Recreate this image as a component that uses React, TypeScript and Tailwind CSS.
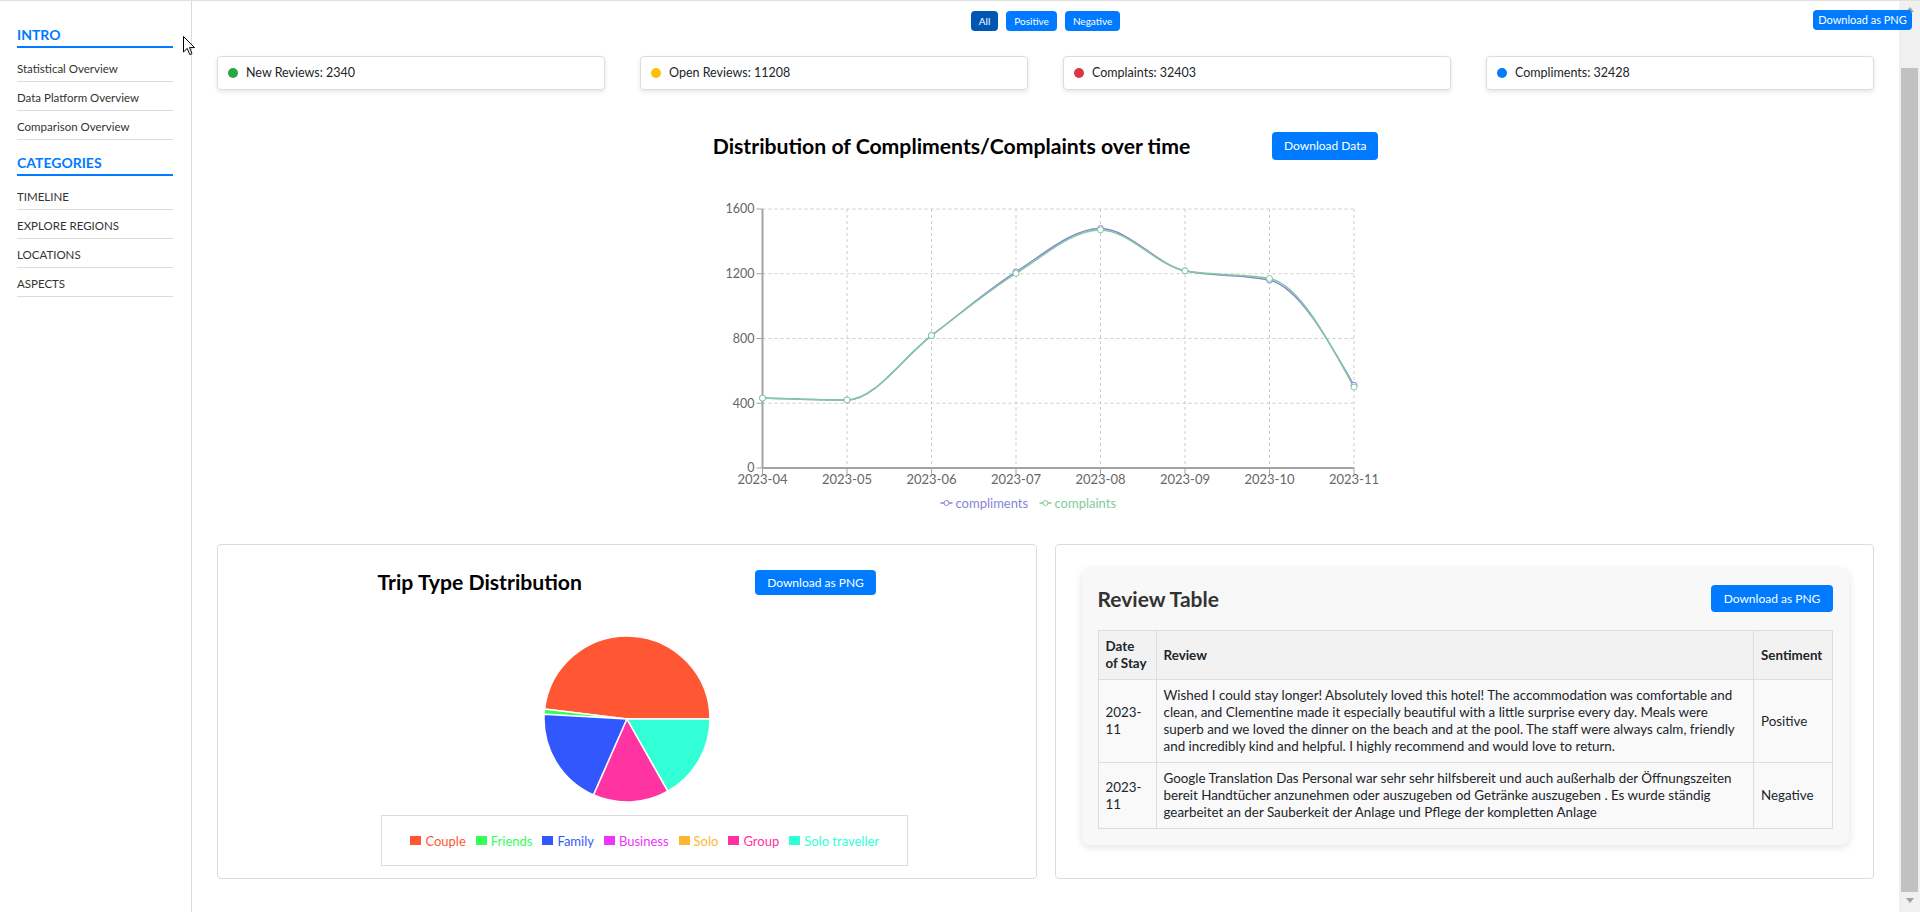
import React from 'react';

type Pt = {x: number, y: number}

const months = ['2023-04', '2023-05', '2023-06', '2023-07', '2023-08', '2023-09', '2023-10', '2023-11']
const compliments = [432, 420, 818, 1212, 1479, 1218, 1161, 511]
const complaints = [432, 420, 818, 1202, 1471, 1218, 1171, 500]

const X0 = 66.5
const STEP = 84.5
const yOf = (v: number) => 277 - v * 259 / 1600

// monotone-x curve, same idea as d3/recharts "monotone"
const monotonePath = (pts: Pt[]) => {
    const n = pts.length
    const sign = (v: number) => (v < 0 ? -1 : 1)
    const t: number[] = new Array(n).fill(0)
    for (let i = 1; i < n - 1; i++) {
        const h0 = pts[i].x - pts[i - 1].x
        const h1 = pts[i + 1].x - pts[i].x
        const s0 = (pts[i].y - pts[i - 1].y) / h0
        const s1 = (pts[i + 1].y - pts[i].y) / h1
        const p = (s0 * h1 + s1 * h0) / (h0 + h1)
        t[i] = (sign(s0) + sign(s1)) * Math.min(Math.abs(s0), Math.abs(s1), 0.5 * Math.abs(p)) || 0
    }
    const h = pts[1].x - pts[0].x
    t[0] = (3 * (pts[1].y - pts[0].y) / h - t[1]) / 2
    const hl = pts[n - 1].x - pts[n - 2].x
    t[n - 1] = (3 * (pts[n - 1].y - pts[n - 2].y) / hl - t[n - 2]) / 2
    let d = `M${pts[0].x},${pts[0].y}`
    for (let i = 0; i < n - 1; i++) {
        const dx = (pts[i + 1].x - pts[i].x) / 3
        d += ` C${pts[i].x + dx},${pts[i].y + dx * t[i]} ${pts[i + 1].x - dx},${pts[i + 1].y - dx * t[i + 1]} ${pts[i + 1].x},${pts[i + 1].y}`
    }
    return d
}

const trips = [
    {name: 'Couple', value: 481, color: '#ff5733'},
    {name: 'Friends', value: 10, color: '#33ff57'},
    {name: 'Family', value: 193, color: '#3357ff'},
    {name: 'Business', value: 0, color: '#f033ff'},
    {name: 'Solo', value: 0, color: '#ffb533'},
    {name: 'Group', value: 148, color: '#ff33a1'},
    {name: 'Solo traveller', value: 168, color: '#33ffd7'},
]

const stats = [
    {label: 'New Reviews: 2340', color: 'bg-[#28a745]'},
    {label: 'Open Reviews: 11208', color: 'bg-[#ffc107]'},
    {label: 'Complaints: 32403', color: 'bg-[#dc3545]'},
    {label: 'Compliments: 32428', color: 'bg-[#007bff]'},
]

const SideSection = ({title, items, className}: {title: string, items: string[], className: string}) => (
    <div className={className}>
        <div className="text-[14px] font-bold leading-[20px] text-[#007bff] border-b-2 border-[#007bff] pb-[1px]">{title}</div>
        <ul className="mt-[5px]">
            {items.map(item => (
                <li key={item} className="text-[11.5px] leading-[16px] text-[#333] pt-[8px] pb-[4px] border-b border-[#dcdcdc]">{item}</li>
            ))}
        </ul>
    </div>
)

const LineChartSvg = () => {
    const xs = months.map((_, i) => X0 + i * STEP)
    const pc = compliments.map((v, i) => ({x: xs[i], y: yOf(v)}))
    const pk = complaints.map((v, i) => ({x: xs[i], y: yOf(v)}))
    const right = xs[xs.length - 1]
    return (
        <svg width={700} height={325} className="block">
            {[400, 800, 1200, 1600].map(v => (
                <line key={v} x1={X0} x2={right} y1={yOf(v)} y2={yOf(v)} stroke="#ccc" strokeDasharray="3 3"/>
            ))}
            {xs.map(x => (
                <line key={x} x1={x} x2={x} y1={18} y2={277} stroke="#ccc" strokeDasharray="3 3"/>
            ))}
            <line x1={X0} x2={X0} y1={18} y2={277} stroke="#a3a3a3" strokeWidth={2}/>
            <line x1={X0} x2={right} y1={277} y2={277} stroke="#a3a3a3" strokeWidth={2}/>
            {[0, 400, 800, 1200, 1600].map(v => (
                <g key={v}>
                    <line x1={X0 - 6} x2={X0} y1={yOf(v)} y2={yOf(v)} stroke="#a3a3a3"/>
                    <text x={X0 - 8} y={yOf(v)} dy="0.35em" textAnchor="end" fontSize={12.5} fill="#666">{v}</text>
                </g>
            ))}
            {months.map((m, i) => (
                <g key={m}>
                    <line x1={xs[i]} x2={xs[i]} y1={277} y2={283} stroke="#a3a3a3"/>
                    <text x={xs[i]} y={288} dy="0.35em" textAnchor="middle" fontSize={13} fill="#666">{m}</text>
                </g>
            ))}
            <path d={monotonePath(pc)} fill="none" stroke="#8884d8" strokeWidth={1.5}/>
            <path d={monotonePath(pk)} fill="none" stroke="#82ca9d" strokeWidth={1.5}/>
            {pc.map((p, i) => <circle key={'c' + i} cx={p.x} cy={p.y} r={3} fill="#fff" stroke="#8884d8"/>)}
            {pk.map((p, i) => <circle key={'k' + i} cx={p.x} cy={p.y} r={3} fill="#fff" stroke="#82ca9d"/>)}
            <g>
                <line x1={244.5} x2={256.5} y1={312} y2={312} stroke="#8884d8" strokeWidth={1.5}/>
                <circle cx={250.5} cy={312} r={2.5} fill="#fff" stroke="#8884d8"/>
                <text x={259.5} y={312} dy="0.35em" fontSize={13} fill="#8884d8">compliments</text>
                <line x1={343.5} x2={355.5} y1={312} y2={312} stroke="#82ca9d" strokeWidth={1.5}/>
                <circle cx={349.5} cy={312} r={2.5} fill="#fff" stroke="#82ca9d"/>
                <text x={358.5} y={312} dy="0.35em" fontSize={13} fill="#82ca9d">complaints</text>
            </g>
        </svg>
    )
}

const PieSvg = () => {
    const total = trips.reduce((s, t) => s + t.value, 0)
    const cx = 85, cy = 85, r = 83
    let angle = 0
    const pt = (a: number) => {
        const rad = a * Math.PI / 180
        return `${cx + r * Math.cos(rad)},${cy - r * Math.sin(rad)}`
    }
    return (
        <svg width={170} height={170} className="block">
            {trips.filter(t => t.value > 0).map(t => {
                const a0 = angle
                const a1 = angle + t.value / total * 360
                angle = a1
                const large = a1 - a0 > 180 ? 1 : 0
                return (
                    <path key={t.name} d={`M${cx},${cy} L${pt(a0)} A${r},${r} 0 ${large} 0 ${pt(a1)} Z`}
                          fill={t.color} stroke="#fff" strokeWidth={1.5}/>
                )
            })}
        </svg>
    )
}

const BlueButton = ({children, className}: {children: React.ReactNode, className: string}) => (
    <button className={`bg-[#007bff] text-white rounded-[4px] ${className}`}>{children}</button>
)

const App: React.FC = () => {
    return (
        <div className="relative flex h-[912px] w-full overflow-hidden border-t border-[#e0e0e0] bg-white font-['Lato',sans-serif] text-[#212529]">
            {/* sidebar */}
            <aside className="w-[192px] shrink-0 border-r border-[#dcdcdc] pl-[17px] pr-[18px]">
                <SideSection className="mt-[24px]" title="INTRO"
                             items={['Statistical Overview', 'Data Platform Overview', 'Comparison Overview']}/>
                <SideSection className="mt-[13px]" title="CATEGORIES"
                             items={['TIMELINE', 'EXPLORE REGIONS', 'LOCATIONS', 'ASPECTS']}/>
            </aside>

            {/* main content */}
            <main className="flex-1 min-w-0 px-[25px]">
                <div className="flex justify-center gap-[8px] pt-[10px]">
                    <button className="h-[20px] px-[8px] rounded-[4px] bg-[#0056b3] text-white text-[10px]">All</button>
                    <BlueButton className="h-[20px] px-[8px] text-[10px]">Positive</BlueButton>
                    <BlueButton className="h-[20px] px-[8px] text-[10px]">Negative</BlueButton>
                </div>

                <div className="grid grid-cols-4 gap-[35px] mt-[25px]">
                    {stats.map(s => (
                        <div key={s.label}
                             className="h-[34px] flex items-center gap-[8px] pl-[10px] border border-[#dcdcdc] rounded-[4px] shadow-[0_2px_4px_rgba(0,0,0,0.1)] text-[12.5px]">
                            <span className={`w-[10px] h-[10px] rounded-full ${s.color}`}/>
                            <span>{s.label}</span>
                        </div>
                    ))}
                </div>

                <div className="flex justify-center items-center gap-[82px] mt-[42px]">
                    <h2 className="text-[21.2px] font-bold leading-[28px] text-black">Distribution of Compliments/Complaints over time</h2>
                    <BlueButton className="h-[28px] w-[106px] text-[12px]">Download Data</BlueButton>
                </div>

                <div className="flex justify-center mt-[31px]">
                    <LineChartSvg/>
                </div>

                <div className="grid grid-cols-2 gap-[18px] mt-[28px]">
                    <section className="h-[335px] border border-[#dcdcdc] rounded-[4px] flex flex-col items-center pt-[25px]">
                        <div className="flex items-center gap-[173px]">
                            <h3 className="text-[21.2px] font-bold leading-[25px] text-black">Trip Type Distribution</h3>
                            <BlueButton className="h-[25px] w-[121px] text-[12px]">Download as PNG</BlueButton>
                        </div>
                        <div className="mt-[39px]">
                            <PieSvg/>
                        </div>
                        <div className="mt-[11px] ml-[36px] w-[527px] h-[51px] border border-[#dcdcdc] flex items-center justify-center gap-[10px]">
                            {trips.map(t => (
                                <div key={t.name} className="flex items-center gap-[4px]">
                                    <span className="w-[11px] h-[9px]" style={{backgroundColor: t.color}}/>
                                    <span className="text-[13px] leading-[16px]" style={{color: t.color}}>{t.name}</span>
                                </div>
                            ))}
                        </div>
                    </section>

                    <section className="h-[335px] border border-[#dcdcdc] rounded-[4px] pt-[24px] pl-[26px] pr-[24px]">
                        <div className="bg-[#f8f8f8] rounded-[8px] shadow-[0_2px_8px_rgba(0,0,0,0.12)] p-[16px]">
                            <div className="flex items-center justify-between">
                                <h3 className="text-[21px] font-bold leading-[27px] text-[#333]">Review Table</h3>
                                <BlueButton className="h-[27px] w-[122px] text-[12px]">Download as PNG</BlueButton>
                            </div>
                            <table className="mt-[18px] w-full table-fixed border-collapse text-[13.4px] leading-[17px]">
                                <colgroup>
                                    <col className="w-[58px]"/>
                                    <col/>
                                    <col className="w-[79px]"/>
                                </colgroup>
                                <thead>
                                <tr className="bg-[#f2f2f2] text-left">
                                    <th className="border border-[#ddd] p-[7px] font-bold">Date of Stay</th>
                                    <th className="border border-[#ddd] p-[7px] font-bold">Review</th>
                                    <th className="border border-[#ddd] p-[7px] font-bold">Sentiment</th>
                                </tr>
                                </thead>
                                <tbody className="bg-[#f9f9f9]">
                                <tr>
                                    <td className="border border-[#ddd] p-[7px]">2023-11</td>
                                    <td className="border border-[#ddd] p-[7px]">Wished I could stay longer! Absolutely loved this hotel! The accommodation was comfortable and clean, and Clementine made it especially beautiful with a little surprise every day. Meals were superb and we loved the dinner on the beach and at the pool. The staff were always calm, friendly and incredibly kind and helpful. I highly recommend and would love to return.</td>
                                    <td className="border border-[#ddd] p-[7px]">Positive</td>
                                </tr>
                                <tr>
                                    <td className="border border-[#ddd] p-[7px]">2023-11</td>
                                    <td className="border border-[#ddd] p-[7px]">Google Translation Das Personal war sehr sehr hilfsbereit und auch außerhalb der Öffnungszeiten bereit Handtücher anzunehmen oder auszugeben od Getränke auszugeben . Es wurde ständig gearbeitet an der Sauberkeit der Anlage und Pflege der kompletten Anlage</td>
                                    <td className="border border-[#ddd] p-[7px]">Negative</td>
                                </tr>
                                </tbody>
                            </table>
                        </div>
                    </section>
                </div>
            </main>

            {/* window scrollbar */}
            <div className="w-[21px] shrink-0 bg-[#f0f0f0] flex flex-col items-center">
                <div className="h-[17px] flex items-center justify-center">
                    <svg width="8" height="5"><path d="M0 5 L4 0 L8 5 Z" fill="#a3a3a3"/></svg>
                </div>
                <div className="mt-[50px] w-[17px] h-[824px] bg-[#c1c1c1]"/>
                <div className="mt-[6px] flex items-center justify-center">
                    <svg width="8" height="5"><path d="M0 0 L8 0 L4 5 Z" fill="#a3a3a3"/></svg>
                </div>
            </div>

            <button className="absolute top-[9px] right-[8px] h-[20px] w-[99px] rounded-[4px] bg-[#007bff] text-white text-[11px]">Download as PNG</button>

            {/* mouse pointer captured in the screenshot */}
            <svg className="absolute left-[183px] top-[35px]" width="13" height="21" viewBox="0 0 13 21">
                <path d="M0.5 0.5 L0.5 16 L4.2 12.4 L6.8 18.6 L9 17.6 L6.5 11.6 L11.5 11.6 Z" fill="#fff" stroke="#000" strokeWidth="1"/>
            </svg>
        </div>
    )
}

export default App;
